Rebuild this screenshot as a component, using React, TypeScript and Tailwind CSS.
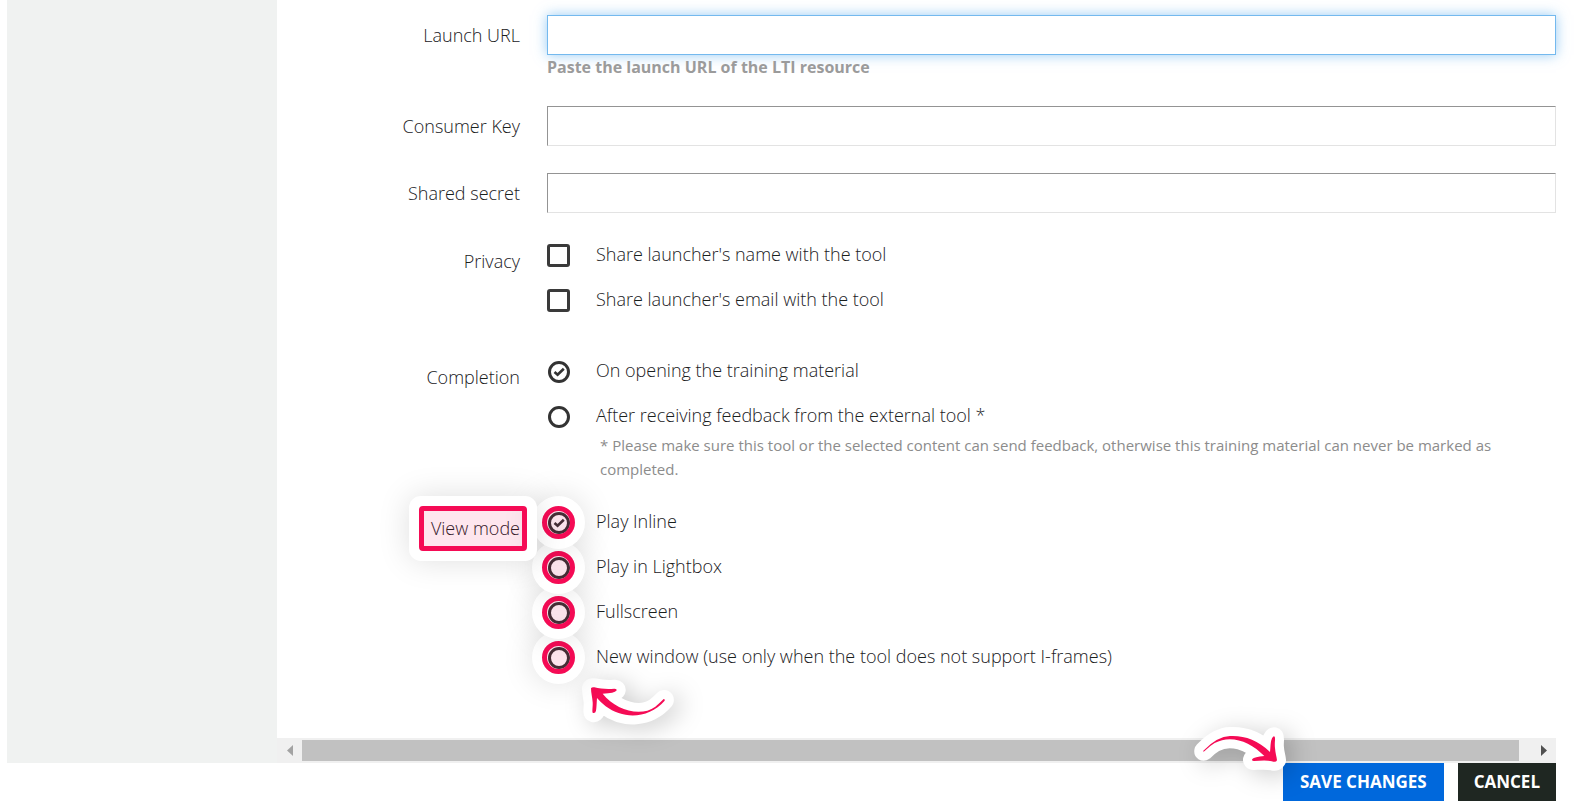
import { ReactNode } from "react";

const viewModes = [
  { label: "Play Inline", layer: "z-40" },
  { label: "Play in Lightbox", layer: "z-30" },
  { label: "Fullscreen", layer: "z-20" },
  { label: "New window (use only when the tool does not support I-frames)", layer: "z-10" },
];

function TextField({ id, label, focused, hint }: { id: string; label: string; focused?: boolean; hint?: string }) {
  return (
    <div className="grid grid-cols-[243px_1fr] gap-x-[27px]">
      <label htmlFor={id} className="pt-2 text-right">
        {label}
      </label>
      <div>
        <input
          id={id}
          type="text"
          className={
            focused
              ? "block h-10 w-full border border-[#74b9ee] bg-white px-3 shadow-[0_0_12px_rgba(82,168,236,0.6)] outline-none"
              : "block h-10 w-full border border-t-[#949494] border-r-[#e3e3e3] border-b-[#e3e3e3] border-l-[#949494] bg-white px-3 outline-none"
          }
        />
        {hint && <p className="text-base leading-6 font-bold text-[#9b9b9b]">{hint}</p>}
      </div>
    </div>
  );
}

function Group({ id, label, children }: { id: string; label: ReactNode; children: ReactNode }) {
  return (
    <div role="group" aria-labelledby={id} className="grid grid-cols-[243px_1fr] gap-x-[27px]">
      <div id={id} className="pt-[13px] text-right">
        {label}
      </div>
      <div>{children}</div>
    </div>
  );
}

function Option({ type, name, label, checked, layer }: { type: "checkbox" | "radio"; name: string; label: string; checked?: boolean; layer?: string }) {
  const round = type === "radio";
  return (
    <label className="flex h-9 items-center gap-[26px]">
      <span className="relative mt-[3px] grid size-[23px] place-items-center">
        <input
          type={type}
          name={name}
          defaultChecked={checked}
          className={
            round
              ? "peer col-start-1 row-start-1 size-[22px] appearance-none rounded-full border-3 border-[#333]"
              : "peer col-start-1 row-start-1 size-[23px] appearance-none rounded-[3px] border-3 border-[#3a3a3a]"
          }
        />
        {round && (
          <svg viewBox="0 0 12 12" className="pointer-events-none col-start-1 row-start-1 hidden size-3 peer-checked:block" fill="none" stroke="#333" strokeWidth="2.6">
            <path d="M1.5 6 4.6 8.8 10.8 2.8" />
          </svg>
        )}
        {layer && (
          <span
            className={`pointer-events-none absolute -inset-[5px] rounded-full border-5 border-[#f50b55] bg-[#f50b55]/10 shadow-[0_0_0_10px_#fff,0_0_32px_10px_rgba(0,0,0,0.13)] ${layer}`}
          />
        )}
      </span>
      {label}
    </label>
  );
}

const arrowUpLeft =
  "M48 70Q50 66 58 67C76 71 94 73 118 71Q128 72 124 77Q119 84 83 86C122 135 196 158 241 125Q252 116 266 102Q271 102 269 107C222 161 146 164 92 124Q78 113 66 99C65 112 65 126 63 137Q61 146 54 144C50 143 54 125 53 112C52 96 48 84 48 70Z";
const arrowDownRight =
  "M70 107Q112 64 150 63C193 61 232 74 270 111C272 96 271 80 276 70Q281 61 284 65C287 70 283 84 285 99C286 115 290 124 291 136Q288 142 280 140C263 135 242 137 222 138Q214 138 217 132Q223 126 253 123C210 78 151 58 104 84Q90 92 73 109Q69 112 70 107Z";

function Arrow({ path, viewBox, className }: { path: string; viewBox: string; className: string }) {
  return (
    <svg viewBox={viewBox} aria-hidden="true" className={`pointer-events-none absolute overflow-visible ${className}`}>
      <path d={path} fill="#fff" stroke="#fff" strokeWidth="54" strokeLinejoin="round" className="drop-shadow-[20px_12px_36px_rgba(0,0,0,0.2)]" />
      <path d={path} fill="#f50b55" />
    </svg>
  );
}

function ScrollBar() {
  return (
    <div className="flex h-[25px] items-center bg-[#f0f0f0]">
      <button type="button" aria-label="Scroll left" className="grid h-full w-[25px] place-items-center text-[#a3a3a3]">
        <svg viewBox="0 0 6 11" className="h-[11px] w-[6px]" fill="currentColor">
          <path d="M6 0V11L0 5.5Z" />
        </svg>
      </button>
      <div className="mr-3 h-[21px] flex-1 bg-[#c1c1c1]" />
      <button type="button" aria-label="Scroll right" className="grid h-full w-[25px] place-items-center text-[#505050]">
        <svg viewBox="0 0 6 11" className="h-[11px] w-[6px]" fill="currentColor">
          <path d="M0 0V11L6 5.5Z" />
        </svg>
      </button>
    </div>
  );
}

export default function App() {
  return (
    <div className="overflow-x-clip bg-white pr-[19px] pl-[7px] font-['Open_Sans','Noto_Sans',sans-serif] text-lg leading-6 font-light text-[#1a201d]">
      <div className="flex">
        <aside className="w-[270px] shrink-0 bg-[#f0f2f1]" />
        <main className="min-w-0 flex-1">
          <form id="lti" className="pt-[15px] pb-16">
            <div className="flex flex-col gap-[27px]">
              <TextField id="launch" label="Launch URL" focused hint="Paste the launch URL of the LTI resource" />
              <TextField id="key" label="Consumer Key" />
              <TextField id="secret" label="Shared secret" />
            </div>

            <div className="pt-[23px]">
              <Group id="privacy" label="Privacy">
                <div className="flex flex-col gap-[9px]">
                  <Option type="checkbox" name="share-name" label="Share launcher's name with the tool" />
                  <Option type="checkbox" name="share-email" label="Share launcher's email with the tool" />
                </div>
              </Group>
            </div>

            <div className="pt-[35px]">
              <Group id="completion" label="Completion">
                <div className="flex flex-col gap-[9px]">
                  <Option type="radio" name="completion" label="On opening the training material" checked />
                  <Option type="radio" name="completion" label="After receiving feedback from the external tool *" />
                </div>
                <p className="pl-[53px] text-[15px] leading-6 font-normal text-[#8c8c8c]">
                  * Please make sure this tool or the selected content can send feedback, otherwise this training material can never be marked as completed.
                </p>
              </Group>
            </div>

            <div className="pt-[22px]">
              <Group
                id="view-mode"
                label={
                  <span className="relative inline-block">
                    View mode
                    <span className="pointer-events-none absolute -top-[10px] -right-[7px] -bottom-[11px] -left-[12px] z-50 rounded-[4px] border-5 border-[#f50b55] bg-[#f50b55]/10 shadow-[0_0_0_10px_#fff,0_0_32px_10px_rgba(0,0,0,0.13)]" />
                  </span>
                }
              >
                <div className="relative flex flex-col gap-[9px]">
                  {viewModes.map((mode, i) => (
                    <Option key={mode.label} type="radio" name="view" label={mode.label} checked={i === 0} layer={mode.layer} />
                  ))}
                  <Arrow path={arrowUpLeft} viewBox="0 0 390 240" className="top-[162px] left-[28px] h-20 w-[130px]" />
                </div>
              </Group>
            </div>
          </form>
          <ScrollBar />
        </main>
      </div>

      <div className="flex justify-end gap-[14px]">
        <div className="relative">
          <button type="submit" form="lti" className="h-[38px] bg-[#0068dc] px-[17px] text-[17px] font-bold text-white">
            SAVE CHANGES
          </button>
          <Arrow path={arrowDownRight} viewBox="0 0 420 210" className="-top-12 -left-[103px] h-[70px] w-[140px]" />
        </div>
        <button type="button" className="h-[38px] bg-[#1f2722] px-4 text-[17px] font-bold text-white">
          CANCEL
        </button>
      </div>
    </div>
  );
}
